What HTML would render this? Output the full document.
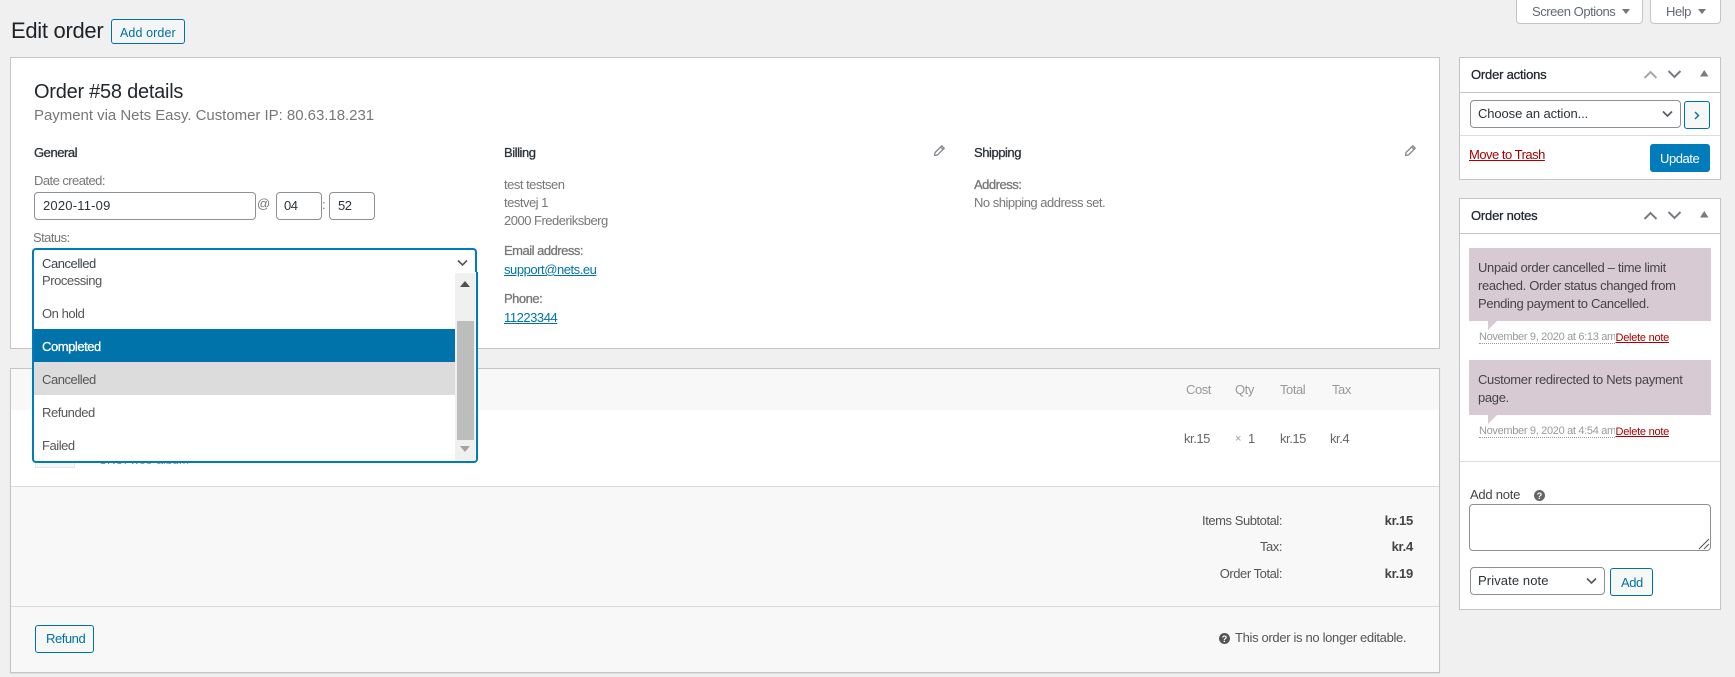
<!DOCTYPE html>
<html lang="en"><head><meta charset="utf-8"><title>Edit order</title>
<style>
html,body{margin:0;padding:0;width:1735px;height:677px;overflow:hidden;background:#f0f0f1}
body{position:relative;font-family:"Liberation Sans",sans-serif;font-size:13px;color:#3c434a}
.b{position:absolute;box-sizing:border-box}
.t{position:absolute;white-space:nowrap;line-height:18px;letter-spacing:-.45px}
.panel{background:#fff;border:1px solid #c3c4c7}
.inp{background:#fff;border:1px solid #8c8f94;border-radius:4px;color:#2c3338}
.sec{background:#f6f7f7;border:1px solid #0071a1;border-radius:3px;color:#0071a1}
.h{color:#2c3338;-webkit-text-stroke:.3px #2c3338}
.s{-webkit-text-stroke:.3px #777}
.g{color:#777;letter-spacing:-.55px}
.l{color:#777;letter-spacing:-.5px}
.n{color:#444;letter-spacing:-.33px}
.m{font-size:11px;color:#999;border-bottom:1px dotted #999;line-height:11px;letter-spacing:-.32px;width:136px;overflow:hidden}
a{color:#0073aa;text-decoration:underline}
.r{color:#a00;text-decoration:underline}
svg{position:absolute;display:block}
.line{position:absolute;height:1px;background:#dcdcde}
</style></head><body>

<!-- screen meta -->
<div class="b" style="left:1516px;top:-2px;width:127px;height:26px;background:#fff;border:1px solid #c3c4c7;border-radius:0 0 4px 4px"></div>
<span class="t" style="left:1532px;top:3px;color:#646970">Screen Options</span>
<svg style="left:1622px;top:9px" width="8" height="5"><path d="M0 0h8L4 5z" fill="#72777c"/></svg>
<div class="b" style="left:1650px;top:-2px;width:71px;height:26px;background:#fff;border:1px solid #c3c4c7;border-radius:0 0 4px 4px"></div>
<span class="t" style="left:1666px;top:3px;color:#646970">Help</span>
<svg style="left:1698px;top:9px" width="8" height="5"><path d="M0 0h8L4 5z" fill="#72777c"/></svg>

<!-- heading -->
<span class="t" style="left:11px;top:19px;font-size:22px;line-height:24px;color:#1d2327;letter-spacing:-.3px">Edit order</span>
<div class="b sec" style="left:111px;top:19px;width:74px;height:25px;background:#f3f5f6"></div>
<span class="t" style="left:120px;top:24px;color:#0071a1;font-size:12.500px;letter-spacing:.1px">Add order</span>

<!-- order data panel -->
<div class="b panel" style="left:10px;top:57px;width:1430px;height:292px"></div>
<span class="t" style="left:34px;top:79px;font-size:20px;line-height:26px;color:#23282d;letter-spacing:-.25px">Order #58 details</span>
<span class="t" style="left:34px;top:107px;font-size:15px;color:#777;letter-spacing:-.03px">Payment via Nets Easy. Customer IP: 80.63.18.231</span>

<span class="t h" style="left:34px;top:144px">General</span>
<span class="t g" style="left:34px;top:172px">Date created:</span>
<div class="b inp" style="left:34px;top:192px;width:222px;height:28px"></div>
<span class="t" style="left:43px;top:197px;color:#2c3338;letter-spacing:.2px">2020-11-09</span>
<span class="t g" style="left:257px;top:195px">@</span>
<div class="b inp" style="left:276px;top:192px;width:46px;height:28px"></div>
<span class="t" style="left:284px;top:197px;color:#2c3338">04</span>
<span class="t g" style="left:322px;top:196px">:</span>
<div class="b inp" style="left:329px;top:192px;width:46px;height:28px"></div>
<span class="t" style="left:338px;top:197px;color:#2c3338">52</span>
<span class="t g" style="left:33px;top:229px">Status:</span>

<span class="t h" style="left:504px;top:144px">Billing</span>
<svg style="left:934px;top:145px" width="11" height="11" viewBox="0 0 11 11"><path d="M7.800.800l2.400 2.400-6.700 6.700-3.200.8.800-3.200zM6.800 2.200l2 2" fill="none" stroke="#82878c" stroke-width="1.300"/></svg>
<span class="t l" style="left:504px;top:176px">test testsen</span>
<span class="t l" style="left:504px;top:194px">testvej 1</span>
<span class="t l" style="left:504px;top:212px">2000 Frederiksberg</span>
<span class="t l s" style="left:504px;top:242px">Email address:</span>
<a class="t" style="left:504px;top:261px;color:#0073aa">support@nets.eu</a>
<span class="t l s" style="left:504px;top:290px">Phone:</span>
<a class="t" style="left:504px;top:309px;color:#0073aa">11223344</a>

<span class="t h" style="left:974px;top:144px">Shipping</span>
<svg style="left:1405px;top:145px" width="11" height="11" viewBox="0 0 11 11"><path d="M7.800.800l2.400 2.400-6.700 6.700-3.200.8.800-3.200zM6.800 2.200l2 2" fill="none" stroke="#82878c" stroke-width="1.300"/></svg>
<span class="t l s" style="left:974px;top:176px">Address:</span>
<span class="t l" style="left:974px;top:194px">No shipping address set.</span>

<!-- items panel -->
<div class="b panel" style="left:10px;top:368px;width:1430px;height:305px;box-shadow:0 1px 1px rgba(0,0,0,.08)"></div>
<div class="b" style="left:11px;top:369px;width:1428px;height:41px;background:#f8f8f8"></div>
<div class="b" style="left:11px;top:486px;width:1428px;height:186px;background:#f8f8f8"></div>
<div class="line" style="left:11px;top:486px;width:1428px"></div>
<div class="line" style="left:11px;top:606px;width:1428px"></div>
<span class="t" style="left:1186px;top:381px;color:#999">Cost</span>
<span class="t" style="left:1235px;top:381px;color:#999">Qty</span>
<span class="t" style="left:1280px;top:381px;color:#999">Total</span>
<span class="t" style="left:1332px;top:381px;color:#999">Tax</span>
<span class="t" style="left:1184px;top:430px;color:#666">kr.15</span>
<span class="t" style="left:1235px;top:430px;color:#999;font-size:11px">×</span>
<span class="t" style="left:1248px;top:430px;color:#666">1</span>
<span class="t" style="left:1280px;top:430px;color:#666">kr.15</span>
<span class="t" style="left:1330px;top:430px;color:#666">kr.4</span>
<div class="b" style="left:35px;top:440px;width:40px;height:28px;background:#f4f6f7;border:1px solid #e4e6e8"></div>
<span class="t" style="left:99px;top:451px;color:#888;font-size:12px;letter-spacing:0">SKU: woo-album</span>

<span class="t" style="right:453px;top:512px;color:#555">Items Subtotal:</span>
<span class="t" style="right:453px;top:538px;color:#555">Tax:</span>
<span class="t" style="right:453px;top:565px;color:#555">Order Total:</span>
<span class="t" style="right:322px;top:512px;font-weight:bold;color:#444;letter-spacing:-.25px">kr.15</span>
<span class="t" style="right:322px;top:538px;font-weight:bold;color:#444;letter-spacing:-.25px">kr.4</span>
<span class="t" style="right:322px;top:565px;font-weight:bold;color:#444;letter-spacing:-.25px">kr.19</span>

<div class="b sec" style="left:35px;top:625px;width:59px;height:28px"></div>
<span class="t" style="left:46px;top:630px;color:#0071a1">Refund</span>
<svg style="left:1219px;top:633px" width="11" height="11" viewBox="0 0 11 11"><circle cx="5.500" cy="5.500" r="5.500" fill="#555"/><text x="5.500" y="9" font-size="9" font-weight="bold" text-anchor="middle" fill="#fff" font-family="Liberation Sans">?</text></svg>
<span class="t" style="left:1235px;top:629px;color:#555;letter-spacing:-.33px">This order is no longer editable.</span>

<!-- status select dropdown -->
<div class="b" style="left:32px;top:248px;width:445px;height:26px;background:#fff;border:2px solid #007cba;border-bottom:0;border-radius:4px 4px 0 0"></div>
<span class="t" style="left:42px;top:255px;color:#3c434a">Cancelled</span>
<svg style="left:457px;top:259px" width="11" height="8" viewBox="0 0 11 8"><path d="M1 1.500l4.500 4.500L10 1.500" fill="none" stroke="#50575e" stroke-width="1.600"/></svg>
<div class="b" style="left:32px;top:272px;width:446px;height:191px;background:#fff;border:2px solid #007cba;border-top:0;border-radius:0 0 4px 4px"></div>
<div class="b" style="left:34px;top:329px;width:421px;height:33px;background:#0073aa"></div>
<div class="b" style="left:34px;top:362px;width:421px;height:33px;background:#dcdcdc"></div>
<div class="b" style="left:455px;top:273px;width:20px;height:188px;background:#f0f0f0"></div>
<div class="b" style="left:457px;top:321px;width:17px;height:119px;background:#bdbdbd"></div>
<svg style="left:460px;top:281px" width="10" height="6"><path d="M0 6h10L5 0z" fill="#505050"/></svg>
<svg style="left:460px;top:446px" width="10" height="6"><path d="M0 0h10L5 6z" fill="#a3a3a3"/></svg>
<span class="t" style="left:42px;top:272px;color:#555">Processing</span>
<span class="t" style="left:42px;top:305px;color:#555">On hold</span>
<span class="t" style="left:42px;top:338px;color:#fff;-webkit-text-stroke:.3px #fff">Completed</span>
<span class="t" style="left:42px;top:371px;color:#555">Cancelled</span>
<span class="t" style="left:42px;top:404px;color:#555">Refunded</span>
<span class="t" style="left:42px;top:437px;color:#555">Failed</span>

<!-- order actions -->
<div class="b panel" style="left:1459px;top:57px;width:262px;height:123px"></div>
<div class="line" style="left:1460px;top:92px;width:260px;background:#c3c4c7"></div>
<span class="t h" style="left:1471px;top:66px;color:#1d2327;letter-spacing:-.2px">Order actions</span>
<svg style="left:1643px;top:70px" width="15" height="9" viewBox="0 0 15 9"><path d="M1.500 8l6-6 6 6" fill="none" stroke="#a7aaad" stroke-width="2"/></svg>
<svg style="left:1667px;top:70px" width="15" height="9" viewBox="0 0 15 9"><path d="M1.500 1l6 6 6-6" fill="none" stroke="#787c82" stroke-width="2"/></svg>
<svg style="left:1700px;top:70px" width="9" height="7"><path d="M0 6.500h8.500L4.250 0z" fill="#787c82"/></svg>
<div class="b inp" style="left:1470px;top:100px;width:211px;height:28px"></div>
<span class="t" style="left:1478px;top:105px;color:#2c3338;letter-spacing:-.1px">Choose an action...</span>
<svg style="left:1662px;top:110px" width="11" height="8" viewBox="0 0 11 8"><path d="M1 1.500l4.500 4.500L10 1.500" fill="none" stroke="#50575e" stroke-width="1.600"/></svg>
<div class="b sec" style="left:1684px;top:101px;width:26px;height:28px"></div>
<svg style="left:1694px;top:111px" width="6" height="9" viewBox="0 0 6 9"><path d="M1 1l3.500 3.500L1 8" fill="none" stroke="#0071a1" stroke-width="1.400"/></svg>
<div class="line" style="left:1460px;top:135px;width:260px"></div>
<span class="t r" style="left:1469px;top:146px;color:#a00;letter-spacing:-.5px">Move to Trash</span>
<div class="b" style="left:1650px;top:144px;width:60px;height:28px;background:#007cba;border-radius:3px"></div>
<span class="t" style="left:1660px;top:150px;color:#fff">Update</span>

<!-- order notes -->
<div class="b panel" style="left:1459px;top:198px;width:262px;height:412px"></div>
<div class="line" style="left:1460px;top:233px;width:260px;background:#c3c4c7"></div>
<span class="t h" style="left:1471px;top:207px;color:#1d2327;letter-spacing:-.2px">Order notes</span>
<svg style="left:1643px;top:211px" width="15" height="9" viewBox="0 0 15 9"><path d="M1.500 8l6-6 6 6" fill="none" stroke="#787c82" stroke-width="2"/></svg>
<svg style="left:1667px;top:211px" width="15" height="9" viewBox="0 0 15 9"><path d="M1.500 1l6 6 6-6" fill="none" stroke="#787c82" stroke-width="2"/></svg>
<svg style="left:1700px;top:211px" width="9" height="7"><path d="M0 6.500h8.500L4.250 0z" fill="#787c82"/></svg>

<div class="b" style="left:1469px;top:248px;width:242px;height:73px;background:#d7cad2"></div>
<svg style="left:1488px;top:321px" width="9" height="9"><path d="M0 0h9L0 9z" fill="#d7cad2"/></svg>
<span class="t n" style="left:1478px;top:259px">Unpaid order cancelled – time limit</span>
<span class="t n" style="left:1478px;top:277px">reached. Order status changed from</span>
<span class="t n" style="left:1478px;top:295px">Pending payment to Cancelled.</span>
<span class="t m" style="left:1479px;top:332px">November 9, 2020 at 6:13 am</span>
<span class="t r" style="left:1615.500px;top:331px;font-size:11px;line-height:14px;letter-spacing:-.25px;color:#a00">Delete note</span>

<div class="b" style="left:1469px;top:360px;width:242px;height:55px;background:#d7cad2"></div>
<svg style="left:1488px;top:415px" width="9" height="9"><path d="M0 0h9L0 9z" fill="#d7cad2"/></svg>
<span class="t n" style="left:1478px;top:371px">Customer redirected to Nets payment</span>
<span class="t n" style="left:1478px;top:389px">page.</span>
<span class="t m" style="left:1479px;top:426px">November 9, 2020 at 4:54 am</span>
<span class="t r" style="left:1615.500px;top:425px;font-size:11px;line-height:14px;letter-spacing:-.25px;color:#a00">Delete note</span>

<div class="line" style="left:1460px;top:461px;width:260px"></div>
<span class="t" style="left:1470px;top:486px;color:#444;letter-spacing:-.25px">Add note</span>
<svg style="left:1534px;top:490px" width="11" height="11" viewBox="0 0 11 11"><circle cx="5.500" cy="5.500" r="5.500" fill="#666"/><text x="5.500" y="9" font-size="9" font-weight="bold" text-anchor="middle" fill="#fff" font-family="Liberation Sans">?</text></svg>
<div class="b inp" style="left:1469px;top:504px;width:242px;height:47px"></div>
<svg style="left:1698px;top:538px" width="12" height="12"><path d="M1 11L11 1M6 11l5-5" stroke="#555" fill="none"/></svg>
<div class="b inp" style="left:1470px;top:567px;width:135px;height:28px"></div>
<span class="t" style="left:1478px;top:572px;color:#2c3338;letter-spacing:.1px">Private note</span>
<svg style="left:1586px;top:577px" width="11" height="8" viewBox="0 0 11 8"><path d="M1 1.500l4.500 4.500L10 1.500" fill="none" stroke="#50575e" stroke-width="1.600"/></svg>
<div class="b sec" style="left:1610px;top:568px;width:43px;height:28px"></div>
<span class="t" style="left:1621px;top:574px;color:#0071a1">Add</span>

</body></html>
